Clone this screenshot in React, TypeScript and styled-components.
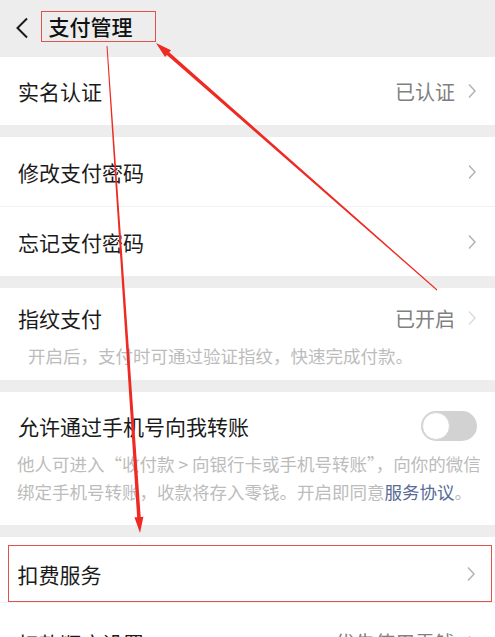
import React from 'react';
import styled, { createGlobalStyle } from 'styled-components';

const GlobalStyle = createGlobalStyle`
  html, body {
    margin: 0;
    padding: 0;
    background: #ededed;
  }
  body {
    font-family: "Noto Sans CJK SC", "Noto Sans", sans-serif;
    -webkit-font-smoothing: antialiased;
  }
`;

const Page = styled.div`
  position: relative;
  width: 495px;
  height: 637px;
  overflow: hidden;
  background: #ededed;
  display: flex;
  flex-direction: column;
  gap: 12px;
`;

const Header = styled.div`
  height: 56px;
  display: flex;
  align-items: center;
  padding-left: 15px;
  gap: 12px;
  flex: none;
  margin-bottom: -11px;
`;

const Title = styled.div`
  font-size: 21px;
  font-weight: 500;
  color: #111;
  height: 29px;
  line-height: 29px;
  margin-top: -3px;
  background: transparent;
  padding: 0 22px 0 6.5px;
  border: 1.5px solid #e0524b;
`;

const Group = styled.div`
  background: #fff;
  flex: none;
`;

const Cell = styled.div<{ $h?: number; $boxed?: boolean }>`
  position: relative;
  height: ${p => p.$h ?? 69}px;
  display: flex;
  align-items: center;
  padding: 0 18px;
  box-sizing: border-box;
  ${p => p.$boxed && `
    margin: 8px 3px 0 8px;
    height: 57px;
    padding: 0 15px 0 8.5px;
    border: 1.5px solid #e0524b;
  `}
  & + & {
    border-top: 1px solid #f2f2f2;
  }
`;

const Label = styled.div`
  flex: 1;
  font-size: 21px;
  color: #1b1b1b;
`;

const Value = styled.span`
  font-size: 20px;
  color: #808080;
  margin-right: 12px;
`;

const Block = styled.div<{ $pb: number }>`
  padding-bottom: ${p => p.$pb}px;
`;

const Head = styled.div<{ $h: number }>`
  height: ${p => p.$h}px;
  display: flex;
  align-items: center;
  padding: 0 18px;
`;

const Note = styled.div<{ $indent?: number; $mt: number }>`
  font-size: 17.5px;
  line-height: 28px;
  color: #bcbcbc;
  white-space: nowrap;
  padding: 0 10px 0 ${p => p.$indent ?? 17}px;
  margin-top: ${p => p.$mt}px;
`;

const Link = styled.span`
  color: #576b95;
`;

const Toggle = styled.div`
  width: 56px;
  height: 30px;
  border-radius: 15px;
  background: #d2d2d2;
  position: relative;
  &::after {
    content: '';
    position: absolute;
    left: 1px;
    top: 1px;
    width: 28px;
    height: 28px;
    border-radius: 50%;
    background: #fff;
    box-sizing: border-box;
    border: 1px solid #d6d6d6;
  }
`;

const Overlay = styled.svg`
  position: absolute;
  left: 0;
  top: 0;
  pointer-events: none;
`;

const Chevron = ({ color = '#b3b3b3' }: { color?: string }) => (
  <svg width="10" height="16" viewBox="0 0 10 16">
    <path d="M2 1.5 L8 8 L2 14.5" fill="none" stroke={color} strokeWidth="1.5" />
  </svg>
);

const Back = () => (
  <svg width="14" height="22" viewBox="0 0 14 22">
    <path d="M12 1.5 L2.5 11 L12 20.5" fill="none" stroke="#1a1a1a" strokeWidth="2" />
  </svg>
);

// tapered red stroke ending in an arrow head at (x2, y2)
const Arrow = ({ x1, y1, x2, y2 }: { x1: number; y1: number; x2: number; y2: number }) => {
  const dx = x2 - x1;
  const dy = y2 - y1;
  const len = Math.hypot(dx, dy);
  const ux = dx / len;
  const uy = dy / len;
  const nx = -uy;
  const ny = ux;
  const headLen = 16;
  const bx = x2 - ux * headLen;
  const by = y2 - uy * headLen;
  const pts = [
    [x1 + nx * 0.5, y1 + ny * 0.5],
    [bx + nx * 1.8, by + ny * 1.8],
    [bx + nx * 4.5, by + ny * 4.5],
    [x2, y2],
    [bx - nx * 4.5, by - ny * 4.5],
    [bx - nx * 1.8, by - ny * 1.8],
    [x1 - nx * 0.5, y1 - ny * 0.5],
  ];
  return <polygon points={pts.map(p => p.join(',')).join(' ')} fill="#ee2a22" />;
};

export default function App() {
  return (
    <Page>
      <GlobalStyle />
      <Header>
        <Back />
        <Title>支付管理</Title>
      </Header>

      <Group>
        <Cell $h={68}>
          <Label>实名认证</Label>
          <Value>已认证</Value>
          <Chevron />
        </Cell>
      </Group>

      <Group>
        <Cell>
          <Label>修改支付密码</Label>
          <Chevron />
        </Cell>
        <Cell $h={70}>
          <Label>忘记支付密码</Label>
          <Chevron />
        </Cell>
      </Group>

      <Group>
        <Block $pb={10}>
          <Head $h={60}>
            <Label>指纹支付</Label>
            <Value>已开启</Value>
            <Chevron color="#dcdcdc" />
          </Head>
          <Note $indent={28} $mt={-6}>开启后，支付时可通过验证指纹，快速完成付款。</Note>
        </Block>
      </Group>

      <Group>
        <Block $pb={19}>
          <Head $h={68}>
            <Label>允许通过手机号向我转账</Label>
            <Toggle />
          </Head>
          <Note $mt={-10}>
            他人可进入“收付款 &gt; 向银行卡或手机号转账”，向你的微信
            <br />
            绑定手机号转账，收款将存入零钱。开启即同意<Link>服务协议</Link>。
          </Note>
        </Block>
      </Group>

      <Group>
        <Cell $boxed>
          <Label>扣费服务</Label>
          <Chevron />
        </Cell>
        <Cell $h={80}>
          <Label>扣款顺序设置</Label>
          <Value>优先使用零钱</Value>
          <Chevron />
        </Cell>
      </Group>

      <Overlay width="495" height="637" viewBox="0 0 495 637">
        <Arrow x1={437} y1={290} x2={156} y2={43} />
        <Arrow x1={107} y1={46} x2={140} y2={533} />
      </Overlay>
    </Page>
  );
}
